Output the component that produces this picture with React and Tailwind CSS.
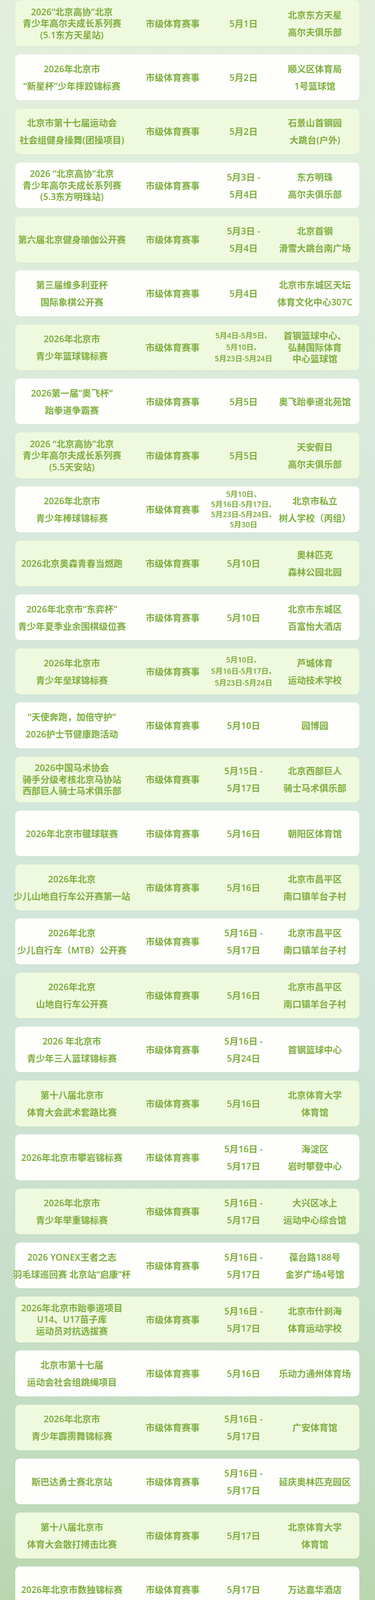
import clsx from 'clsx';

const rows = [
  { name: ['2026“北京高协”北京', '青少年高尔夫成长系列赛', '(5.1东方天星站)'], date: ['5月1日'], venue: ['北京东方天星', '高尔夫俱乐部'] },
  { name: ['2026年北京市', '“新星杯”少年摔跤锦标赛'], date: ['5月2日'], venue: ['顺义区体育局', '1号篮球馆'] },
  { name: ['北京市第十七届运动会', '社会组健身操舞(团操项目)'], date: ['5月2日'], venue: ['石景山首钢园', '大跳台(户外)'] },
  { name: ['2026 “北京高协”北京', '青少年高尔夫成长系列赛', '(5.3东方明珠站)'], date: ['5月3日 -', '5月4日'], venue: ['东方明珠', '高尔夫俱乐部'] },
  { name: ['第六届北京健身瑜伽公开赛'], date: ['5月3日 -', '5月4日'], venue: ['北京首钢', '滑雪大跳台南广场'] },
  { name: ['第三届维多利亚杯', '国际象棋公开赛'], date: ['5月4日'], venue: ['北京市东城区天坛', '体育文化中心307C'] },
  { name: ['2026年北京市', '青少年篮球锦标赛'], date: ['5月4日-5月5日、', '5月10日、', '5月23日-5月24日'], venue: ['首钢篮球中心、', '弘赫国际体育', '中心篮球馆'] },
  { name: ['2026第一届“奥飞杯”', '跆拳道争霸赛'], date: ['5月5日'], venue: ['奥飞跆拳道北苑馆'] },
  { name: ['2026 “北京高协”北京', '青少年高尔夫成长系列赛', '(5.5天安站)'], date: ['5月5日'], venue: ['天安假日', '高尔夫俱乐部'] },
  { name: ['2026年北京市', '青少年棒球锦标赛'], date: ['5月10日、', '5月16日-5月17日、', '5月23日-5月24日、', '5月30日'], venue: ['北京市私立', '树人学校（丙组）'] },
  { name: ['2026北京奥森青春当燃跑'], date: ['5月10日'], venue: ['奥林匹克', '森林公园北园'] },
  { name: ['2026年北京市“东弈杯”', '青少年夏季业余围棋级位赛'], date: ['5月10日'], venue: ['北京市东城区', '百富怡大酒店'] },
  { name: ['2026年北京市', '青少年垒球锦标赛'], date: ['5月10日、', '5月16日-5月17日、', '5月23日-5月24日'], venue: ['芦城体育', '运动技术学校'] },
  { name: ['“天使奔跑，加倍守护”', '2026护士节健康跑活动'], date: ['5月10日'], venue: ['园博园'] },
  { name: ['2026中国马术协会', '骑手分级考核北京马协站', '西部巨人骑士马术俱乐部'], date: ['5月15日 -', '5月17日'], venue: ['北京西部巨人', '骑士马术俱乐部'] },
  { name: ['2026年北京市毽球联赛'], date: ['5月16日'], venue: ['朝阳区体育馆'] },
  { name: ['2026年北京', '少儿山地自行车公开赛第一站'], date: ['5月16日'], venue: ['北京市昌平区', '南口镇羊台子村'] },
  { name: ['2026年北京', '少儿自行车（MTB）公开赛'], date: ['5月16日 -', '5月17日'], venue: ['北京市昌平区', '南口镇羊台子村'] },
  { name: ['2026年北京', '山地自行车公开赛'], date: ['5月16日'], venue: ['北京市昌平区', '南口镇羊台子村'] },
  { name: ['2026 年北京市', '青少年三人篮球锦标赛'], date: ['5月16日 -', '5月24日'], venue: ['首钢篮球中心'] },
  { name: ['第十八届北京市', '体育大会武术套路比赛'], date: ['5月16日'], venue: ['北京体育大学', '体育馆'] },
  { name: ['2026年北京市攀岩锦标赛'], date: ['5月16日 -', '5月17日'], venue: ['海淀区', '岩时攀登中心'] },
  { name: ['2026年北京市', '青少年举重锦标赛'], date: ['5月16日 -', '5月17日'], venue: ['大兴区冰上', '运动中心综合馆'] },
  { name: ['2026 YONEX王者之志', '羽毛球巡回赛 北京站“启康”杯'], date: ['5月16日 -', '5月17日'], venue: ['葆台路188号', '金岁广场4号馆'] },
  { name: ['2026年北京市跆拳道项目', 'U14、U17苗子库', '运动员对抗选拔赛'], date: ['5月16日 -', '5月17日'], venue: ['北京市什刹海', '体育运动学校'] },
  { name: ['北京市第十七届', '运动会社会组跳绳项目'], date: ['5月16日'], venue: ['乐动力通州体育场'] },
  { name: ['2026年北京市', '青少年霹雳舞锦标赛'], date: ['5月16日 -', '5月17日'], venue: ['广安体育馆'] },
  { name: ['斯巴达勇士赛北京站'], date: ['5月16日 -', '5月17日'], venue: ['延庆奥林匹克园区'] },
  { name: ['第十八届北京市', '体育大会散打搏击比赛'], date: ['5月17日'], venue: ['北京体育大学', '体育馆'] },
  { name: ['2026年北京市数独锦标赛'], date: ['5月17日'], venue: ['万达嘉华酒店'] },
  { name: ['2026年北京市', '青少年曲棍球锦标赛'], date: ['5月22日、', '5月23日-5月24日、', '5月30日-5月31日'], venue: ['芦城体育运动', '技术学校'] },
  { name: ['2026斯巴达越野周末北京站'], date: ['5月23日 -', '5月24日'], venue: ['延庆奥林匹克园区'] },
  { name: ['2026泰兰尼斯-', '斯巴达勇士儿童赛'], date: ['5月23日 -', '5月24日'], venue: ['北京环球城市大道'] },
  { name: ['“北京世园公园杯”', '京张公路自行车公开赛'], date: ['5月23日 -', '5月24日'], venue: ['北京世园公园'] },
  { name: ['2026年北京', '公路自行车公开赛'], date: ['5月23日'], venue: ['北京世园公园'] },
  { name: ['2026年北京市', '青少年武术散打锦标赛'], date: ['5月23日 -', '5月25日'], venue: ['朝阳体育馆'] },
  { name: ['2026年北京市', '青少年羽毛球锦标赛'], date: ['5月23日-5月24日、', '5月30日-5月31日'], venue: ['北京交通大学'] },
  { name: ['第四届北京', '腰旗橄榄球公开赛'], date: ['5月23日 -', '5月24日'], venue: ['通州区运河', '奥体中心足球场'] },
  { name: ['2026年北京市', '青少年网球锦标赛'], date: ['5月23日 -', '5月24日'], venue: ['北京市网球运动', '管理中心'] },
  { name: ['2026年北京市', '夏季围棋精英赛'], date: ['5月23日 -', '5月24日'], venue: ['圣地苑酒店', '二层宴会厅'] },
  { name: ['2026年北京市', '青少年排球锦标赛'], date: ['5月23日 -', '6月7日'], venue: ['弘赫国际', '体育运动中心'] },
  { name: ['2026年北京市', '青少年儿童体操锦标赛'], date: ['5月23日 -', '5月24日'], venue: ['月坛体育馆'] },
  { name: ['第三十六届北京市', '儿童游泳比赛'], date: ['5月30日 -', '5月31日'], venue: ['怡海中学游泳馆'] },
  { name: ['2026年北京市', '青少年击剑锦标赛'], date: ['5月30日 -', '5月31日'], venue: ['门头沟区', '体育文化中心', '(三层综合馆)'] },
  { name: ['2026年北京市', '青少年武术套路锦标赛'], date: ['5月30日 -', '6月1日'], venue: ['朝阳体育馆'] },
  { name: ['2026年“八喜杯”北京', '青少年跆拳道大奖赛'], date: ['5月30日 -', '5月31日'], venue: ['国家奥林匹克', '体育中心体育馆'] },
  { name: ['2026年北京市', '首届“幼苗杯”围棋比赛'], date: ['5月30日 -', '5月31日'], venue: ['中海金融中心'] },
  { name: ['2026年北京市', '青少年空手道锦标赛'], date: ['5月30日 -', '5月31日'], venue: ['乐动力通州', '体育场篮羽馆'] },
  { name: ['北京市第十七届', '运动会社会组飞盘项目'], date: ['5月30日 -', '5月31日'], venue: ['北京市通州区', '运河奥体公园', '综合体育场'] },
  { name: ['2026年北京市', '青少年帆船锦标赛'], date: ['5月31日'], venue: ['金海湖'] },
];

// multi-range dates are set smaller in the poster
const isCompact = (lines) =>
  lines.some((l) => l.includes('、') || (l.match(/月/g) || []).length > 1);

function Cell({ lines, small }) {
  const leading =
    lines.length >= 4 ? 'leading-[26px]' : lines.length === 3 ? 'leading-[29.5px]' : 'leading-[44px]';
  return (
    <div
      className={clsx(
        'flex min-w-0 flex-col items-center justify-center whitespace-nowrap',
        small ? 'text-[19px]' : 'text-[23px]',
        leading
      )}
    >
      {lines.map((l, i) => (
        <span key={i}>{l}</span>
      ))}
    </div>
  );
}

function EventCard({ row, index }) {
  return (
    <div
      className={clsx(
        'grid h-[117.5px] shrink-0 grid-cols-[290px_226px_137px_228px] rounded-xl shadow-[0_1px_2px_rgba(60,100,30,0.08)]',
        index % 2 === 0 ? 'bg-[#eff9de]' : 'bg-[#fefffc]'
      )}
    >
      <Cell lines={row.name} />
      <Cell lines={['市级体育赛事']} />
      <Cell lines={row.date} small={isCompact(row.date)} />
      <Cell lines={row.venue} />
    </div>
  );
}

export default function App() {
  return (
    <div className="h-[7025px] w-[960px] overflow-hidden bg-[linear-gradient(to_bottom,#e3efdc_0%,#e0eedb_4%,#d6e8dc_21%,#d0e5d8_37%,#c0dbbd_54%,#b2d3a2_62%,#a2c98b_71%,#8fbd6b_79%,#7aae47_87%,#6ea436_96%,#6ba233_100%)] font-['Noto_Sans','Noto_Sans_CJK_SC',sans-serif] font-semibold text-[#80b040]">
      <div className="ml-[39px] mr-[40px] flex flex-col gap-[20.75px] pt-px">
        {rows.map((row, i) => (
          <EventCard key={i} row={row} index={i} />
        ))}
      </div>
      <div className="mt-[19.5px] pl-[44px] text-[20px] font-normal leading-[39px] text-[#c6e2a8]">
        <p>
          <span className="relative -top-[7px] text-[12px] leading-none">*</span>以上赛事信息来源:北京市体育竞赛管理系统
        </p>
        <p>
          <span className="relative -top-[7px] text-[12px] leading-none">*</span>实际举办赛事以官方最终公布为准
        </p>
      </div>
    </div>
  );
}
